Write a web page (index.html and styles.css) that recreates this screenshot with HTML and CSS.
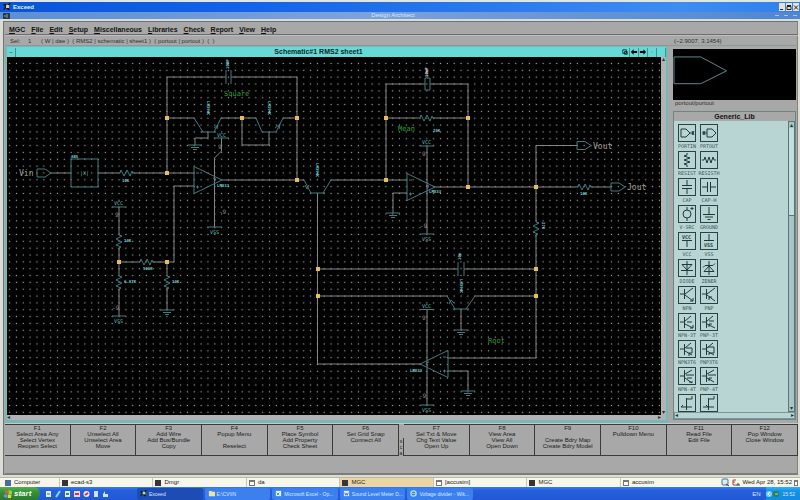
FILE: index.html
```html
<!DOCTYPE html>
<html lang="en">
<head>
<meta charset="utf-8">
<title>Exceed</title>
<link rel="stylesheet" href="styles.css">
</head>
<body>
<svg class="defs" aria-hidden="true">
  <defs>
    <pattern id="grid" x="6.2" y="60.1" width="6.84" height="6.84" patternUnits="userSpaceOnUse"><rect x="2.8" y="2.8" width="1.200" height="1.200" fill="#a6a6a6"/></pattern>
    <path id="res" d="M-8 0h2l1-3 3 6 3-6 3 6 2-5 1 2h2"/>
    <path id="gnd" d="M-7 0H7M-4 2.500H4M-2 4.500H2"/>
    <path id="port" d="M0-4h8l6 4-6 4H0z"/>
    <path id="amp" d="M0-13.500V13.500L28 0zM2-7h3M2 7h3M3.500 5.500v3M19-2l3 1-2 3"/>
    <rect id="node" x="-2" y="-2" width="4" height="4"/>
  </defs>
</svg>

<header class="exceed-bar">
  <svg class="logo" viewBox="0 0 8 8"><path d="M0 1h3l1 2 2-3h2L5 4l2 3H5L3 5 1 7H0l2-3z" fill="#111"/><path d="M3 2h3v3H3z" fill="#d9dc50"/></svg>
  <h1>Exceed</h1>
  <div class="win-buttons">
    <button type="button" aria-label="Minimize"><svg viewBox="0 0 6 7"><path d="M1 5.500h3"/></svg></button>
    <button type="button" aria-label="Restore"><svg viewBox="0 0 6 7"><path d="M1 2.500h4v3H1zM1 1.500h4"/></svg></button>
    <button type="button" aria-label="Close"><svg viewBox="0 0 6 7"><path d="M1 1.500l4 4M5 1.500l-4 4"/></svg></button>
  </div>
</header>
<div class="app-bar">
  <svg class="logo" viewBox="0 0 8 6"><path d="M0 0h7v6H0z" fill="#23384a"/><path d="M1 3h2M4 1v4" stroke="#8fa7b5"/></svg>
  <h2>Design Architect</h2>
  <span class="app-buttons"><i></i><i></i><i></i></span>
</div>

<main class="app">
  <nav class="menu">
    <button type="button"><u>M</u>GC</button><button type="button"><u>F</u>ile</button><button type="button"><u>E</u>dit</button><button type="button"><u>S</u>etup</button><button type="button"><u>M</u>iscellaneous</button><button type="button"><u>L</u>ibraries</button><button type="button"><u>C</u>heck</button><button type="button"><u>R</u>eport</button><button type="button"><u>V</u>iew</button><button type="button"><u>H</u>elp</button>
  </nav>
  <div class="status">
    <span class="sel">Sel:</span><span class="count">1</span><span class="path">( W | dae )&nbsp; ( RMS2 | schematic | sheet1 )&nbsp; ( portout | portout )&nbsp; (&nbsp; )</span>
    <span class="coords">(−2.9007, 3.1454)</span>
  </div>

  <div class="work">
    <section class="sheet">
      <div class="sheet-title">
        <button type="button" aria-label="Window menu">–</button>
        <h3>Schematic#1 RMS2 sheet1</h3>
        <div class="sheet-tools">
          <button type="button" aria-label="Copy view"><svg viewBox="0 0 9 9"><path d="M2 2h4v4H2zM4 4h3v3H4z" fill="none" stroke="#123"/></svg></button>
          <button type="button" aria-label="Back"><svg viewBox="0 0 9 9"><path d="M1 4.500l3-3v2h4v2H4v2z"/></svg></button>
          <button type="button" aria-label="Forward"><svg viewBox="0 0 9 9"><path d="M8 4.500l-3-3v2H1v2h4v2z"/></svg></button>
          <button type="button" aria-label="Iconify"><svg viewBox="0 0 9 9"><path d="M4 4h1v1H4z" fill="#3a9a9a"/></svg></button>
          <button type="button" aria-label="Maximize"></button>
        </div>
      </div>
      <div class="sheet-body">
        <svg class="schematic" role="img" aria-label="RMS detector schematic">
          <g transform="translate(-7 -57)">
            <rect x="7" y="60" width="3000" height="3000" fill="url(#grid)"/>
            <g class="wire">
              <path d="M167 173V77H226M231 77H297V180M167 118H194M221 118H256M283 118H297M208 132V138H195V145M269 132V145H242V118M221.500 138V151L214.500 158V227M167 173H194M194 186H174V262H154M222 180H304M50 173H71M98 173H118M134 173H167M119 207V234M119 248V274M119 289V316M119 262H138M167 262V274M167 288V310M331 180H407M386 180V84H425M430 84H468V187M386 118H418M434 118H468M427 146V234M407 193H393V213M434 187H576M592 187H611M536 187V145.500H577M536 187V221M536 235V358H448M317.500 193V364H420M318 269H458M464 269H536M318 296H447M475 296H536M461 309V330M427 309V405M448 371H468V391"/>
            </g>
            <g class="part">
              <path d="M226 70V84M231 70V84M194 118L203 132M201 132H216M214 132L221 118M214 128l4-3-1 4M256 118L262 132M262 132H277M276 132L283 118M275 128l5-4-1 5M304 180L311 193M310 193H325M323 193L331 180M305 185l2 4 2-4M447 296L455 309M453 309H469M466 309L475 296M449 304l2-4 3 3M458 262V276M464 262V276M425 78h5v12h-5zM71 159H98V187H71z"/>
              <path d="M214 138H229M207 227H222M112 207H126M112 316H126M420 146H434M420 234H434M420 309.500H434M420 405H434"/>
              <use href="#gnd" x="195" y="145"/><use href="#gnd" x="167" y="310"/><use href="#gnd" x="393" y="213"/><use href="#gnd" x="461" y="330"/><use href="#gnd" x="468" y="391"/>
              <use href="#res" x="126" y="173"/><use href="#res" x="146" y="262"/><use href="#res" x="426" y="118"/><use href="#res" x="584" y="187"/>
              <use href="#res" transform="translate(119 241) rotate(90)"/><use href="#res" transform="translate(119 282) rotate(90)"/><use href="#res" transform="translate(167 282) rotate(90)"/><use href="#res" transform="translate(536 228) rotate(90)"/>
              <use href="#amp" x="194" y="180"/><use href="#amp" x="407" y="187"/><use href="#amp" transform="translate(448 364) scale(-1 1)"/>
              <use href="#port" x="37" y="173"/><use href="#port" x="577" y="145.500"/><use href="#port" x="611" y="187"/>
            </g>
            <g class="node">
              <use href="#node" x="167" y="118"/><use href="#node" x="242" y="118"/><use href="#node" x="297" y="118"/><use href="#node" x="297" y="180"/><use href="#node" x="167" y="173"/><use href="#node" x="119" y="262"/><use href="#node" x="167" y="262"/><use href="#node" x="386" y="118"/><use href="#node" x="468" y="118"/><use href="#node" x="386" y="180"/><use href="#node" x="468" y="187"/><use href="#node" x="536" y="187"/><use href="#node" x="318" y="269"/><use href="#node" x="318" y="296"/><use href="#node" x="536" y="269"/><use href="#node" x="536" y="296"/>
            </g>
            <g class="net">
              <text x="19" y="176">Vin</text><text x="593" y="149">Vout</text><text x="627" y="190">Jout</text>
            </g>
            <g class="note">
              <text x="224" y="96">Square</text><text x="398" y="131">Mean</text><text x="488" y="343">Root</text>
            </g>
            <g class="pin">
              <text x="219" y="214">-9</text><text x="218" y="149">9</text><text x="115" y="217">9</text><text x="112" y="310">-9</text><text x="422" y="156">9</text><text x="420" y="228">-9</text><text x="422" y="320">9</text><text x="419" y="398">-9</text>
            </g>
            <g class="label">
              <text x="71" y="158">ABS</text><text x="122" y="182">10K</text><text x="124" y="242">10K</text><text x="124" y="283">6.87K</text><text x="172" y="283">10K</text><text x="143" y="270">500K</text><text x="433" y="132">20K</text><text x="580" y="195">10K</text>
              <text x="217" y="187">LM833</text><text x="429" y="193">LM833</text><text x="410" y="372">LM833</text>
              <text transform="translate(207 101) rotate(90)">LM394C</text><text transform="translate(268 101) rotate(90)">LM394C</text><text transform="translate(316 163) rotate(90)">LM394C</text><text transform="translate(460 279) rotate(90)">LM394C</text><text transform="translate(542 222) rotate(90)">27K</text><text transform="translate(229 69) rotate(-90)">100P</text><text transform="translate(461 260) rotate(-90)">10n</text><text class="picked" transform="translate(428 77) rotate(-90)">10uF</text>
            </g>
            <g class="rail">
              <text x="217" y="137">VCC</text><text x="210" y="234">VSS</text><text x="114" y="205">VCC</text><text x="114" y="323">VSS</text><text x="422" y="144">VCC</text><text x="422" y="241">VSS</text><text x="422" y="308">VCC</text><text x="422" y="412">VSS</text><text x="80" y="175">|X|</text>
            </g>
          </g>
        </svg>
        <div class="vscroll"><span>▴</span><span>▾</span></div>
        <div class="hscroll"><span>◂</span><span>▸</span></div>
      </div>
    </section>

    <aside class="side">
      <div class="preview"><svg viewBox="0 0 124 51" preserveAspectRatio="xMinYMin meet"><path d="M1 8H28L54 22L28 35H1z" fill="none" stroke="#5b8b8b"/></svg></div>
      <p class="preview-name">portout/portout</p>
      <section class="library">
        <h3>Generic_Lib</h3>
        <div class="library-body">
          <div class="parts">
            <button type="button"><svg viewBox="0 0 18 18"><path d="M3 5h5l4 4-4 4H3zM12 9h4M14 7l2 4M14 11l2-4"/></svg>PORTIN</button>
            <button type="button"><svg viewBox="0 0 18 18"><path d="M7 5h5l4 4-4 4H7zM2 9h5M3 7l2 4M3 11l2-4"/></svg>PRTOUT</button>
            <button type="button"><svg viewBox="0 0 18 18"><path d="M9 2v2l-3 1 6 2-6 2 6 2-6 2 3 1v2"/></svg>RESIST</button>
            <button type="button"><svg viewBox="0 0 18 18"><path d="M2 9h2l1-3 2 6 2-6 2 6 2-6 1 3h2"/></svg>RESISTH</button>
            <button type="button"><svg viewBox="0 0 18 18"><path d="M9 2v5M4 7.500h10M4 10.500h10M9 11v5"/></svg>CAP</button>
            <button type="button"><svg viewBox="0 0 18 18"><path d="M2 9h5M7.500 4v10M10.500 4v10M11 9h5"/></svg>CAP-H</button>
            <button type="button"><svg viewBox="0 0 18 18"><path d="M9 2v3M9 13v3M14 2v3M12.500 3.500h3"/><circle cx="9" cy="9" r="4"/></svg>V-SRC</button>
            <button type="button"><svg viewBox="0 0 18 18"><path d="M9 2v7M3 9.500h12M5 12h8M7.500 14.500h3"/></svg>GROUND</button>
            <button type="button"><svg viewBox="0 0 18 18"><path d="M4 8.500h10M9 9v6"/><text x="4" y="7">VCC</text></svg>VCC</button>
            <button type="button"><svg viewBox="0 0 18 18"><path d="M9 2v6M4 8.500h10"/><text x="4" y="15">VSS</text></svg>VSS</button>
            <button type="button"><svg viewBox="0 0 18 18"><path d="M9 2v14M4 5.500h10L9 11zM3 11.500h12"/></svg>DIODE</button>
            <button type="button"><svg viewBox="0 0 18 18"><path d="M9 2v14M4 12.500h10L9 7zM3 8.500l2-2h8l2-2"/></svg>ZENER</button>
            <button type="button"><svg viewBox="0 0 18 18"><path d="M2 8h4M6.500 3v10M7 8l8-6M7 9l8 6M12 15h3v-3"/></svg>NPN</button>
            <button type="button"><svg viewBox="0 0 18 18"><path d="M2 8h4M6.500 3v10M7 8l8-6M7 9l8 6M12 11h-3v3"/></svg>PNP</button>
            <button type="button"><svg viewBox="0 0 18 18"><path d="M2 9h4M6.500 4v11M7 8l6-5M7 11l8 4M12 15h3v-3M9 9h5"/></svg>NPN-3T</button>
            <button type="button"><svg viewBox="0 0 18 18"><path d="M2 9h4M6.500 4v11M7 8l6-5M7 11l8 4M12 11h-3v3M9 8h5"/></svg>PNP-3T</button>
            <button type="button"><svg viewBox="0 0 18 18"><path d="M2 9h4M6.500 4v11M7 8l6-5M7 11l7 4M8 8h6v5h-3v3"/></svg>NPN3T6</button>
            <button type="button"><svg viewBox="0 0 18 18"><path d="M2 9h4M6.500 4v11M7 8l6-5M7 11l7 4M8 7h6v6h-5v2"/></svg>PNP3T6</button>
            <button type="button"><svg viewBox="0 0 18 18"><path d="M2 9h4M6.500 3v12M7 7l7-4M7 11l7 5M11 15h4M8 8h8M9 11h5"/></svg>NPN-4T</button>
            <button type="button"><svg viewBox="0 0 18 18"><path d="M2 9h4M6.500 3v12M7 7l7-4M7 11l7 4M12 11h-3v3M8 8h8"/></svg>PNP-4T</button>
            <button type="button" aria-label="N-channel JFET"><svg viewBox="0 0 18 18"><path d="M8.500 4v12M9 5h5M14 2v3M9 13h5M3 13h5M5 11l-2 2"/></svg></button>
            <button type="button" aria-label="P-channel JFET"><svg viewBox="0 0 18 18"><path d="M8.500 4v12M9 5h5M14 2v3M9 13h5M3 13h5M6 11l2 2"/></svg></button>
          </div>
          <div class="vscroll"><span>▴</span><i></i><span>▾</span></div>
          <div class="hscroll"><span>◂</span><span>▸</span></div>
        </div>
      </section>
    </aside>
  </div>

  <div class="keys">
    <button type="button">F1<br>Select Area Any<br>Select Vertex<br>Reopen Select</button>
    <button type="button">F2<br>Unselect All<br>Unselect Area<br>Move</button>
    <button type="button">F3<br>Add Wire<br>Add Bus/Bundle<br>Copy</button>
    <button type="button">F4<br>Popup Menu<br><br>Reselect</button>
    <button type="button">F5<br>Place Symbol<br>Add Property<br>Check Sheet</button>
    <button type="button">F6<br>Set Grid Snap<br>Connect All</button>
    <span class="mods">s<br>c<br>a</span>
    <button type="button">F7<br>Sel Txt &amp; Move<br>Chg Text Value<br>Open Up</button>
    <button type="button">F8<br>View Area<br>View All<br>Open Down</button>
    <button type="button">F9<br><br>Create Bdry Map<br>Create Bdry Model</button>
    <button type="button">F10<br>Pulldown Menu</button>
    <button type="button">F11<br>Read File<br>Edit File</button>
    <button type="button">F12<br>Pop Window<br>Close Window</button>
  </div>
  <div class="message"></div>
</main>

<nav class="panel">
  <button type="button" class="computer"><i class="ico blue"></i>Computer</button>
  <div class="panel-tasks">
    <button type="button"><i class="ico"></i>ecad-s3</button>
    <button type="button"><i class="ico"></i>Dmgr</button>
    <button type="button"><i class="ico frame"></i>da</button>
    <button type="button" class="active"><i class="ico"></i>MGC</button>
    <button type="button"><i class="ico frame"></i>[accusim]</button>
    <button type="button"><i class="ico"></i>MGC</button>
    <button type="button"><i class="ico frame"></i>accusim</button>
  </div>
  <svg class="panel-tray" viewBox="0 0 20 9"><rect x="1" y="1" width="6" height="6" rx="1" fill="#dceaf5" stroke="#457096"/><path d="M5 6l3 2" stroke="#333"/><path d="M12 2h3M12 2v5h3M12 4h2" stroke="#b04040" fill="none"/><path d="M15 7h4M17 5v2" stroke="#333"/></svg>
  <time>Wed Apr 28, 15:52</time>
  <i class="ico frame end"></i>
</nav>

<footer class="taskbar">
  <button type="button" class="start"><svg viewBox="0 0 8 8"><path d="M1 1l3-1v3.500H1z" fill="#ef5b2b"/><path d="M4.500 0L8 1v3H4.500z" fill="#8cd24a"/><path d="M0 4.500h3.500V8L0 7z" fill="#5b9bf5"/><path d="M4 4.500h3.500L7 8H4z" fill="#f8cf3a"/></svg>start</button>
  <div class="quick">
    <svg viewBox="0 0 66 8"><rect x="1" y="1" width="5" height="6" fill="#e8f0ff"/><path d="M2 4h3" stroke="#2a62c8"/><path d="M11 7l4-6" stroke="#7fe0e8" stroke-width="2"/><rect x="20" y="1" width="5" height="6" fill="#dff2e0"/><path d="M21 4h3" stroke="#2c9b46" stroke-width="2"/><rect x="29" y="1" width="6" height="6" fill="#f2d0d4"/><path d="M30 4h4" stroke="#d8324a" stroke-width="2"/><circle cx="41.500" cy="4" r="3" fill="#f4e3ea"/><path d="M40 5l3-2" stroke="#d22b4a" stroke-width="2"/><rect x="49" y="1" width="4" height="6" fill="#cfe3fa"/><path d="M58 7V4l2-3v3h3v3z" fill="#cfe3fa"/></svg>
  </div>
  <div class="win-tasks">
    <button type="button" class="active"><svg viewBox="0 0 8 8"><path d="M0 1h3l1 2 2-3h2L5 4l2 3H5L3 5 1 7H0l2-3z" fill="#0b1a30"/><path d="M3 2h3v3H3z" fill="#d9dc50"/></svg><b>Exceed</b></button>
    <button type="button"><svg viewBox="0 0 8 8"><path d="M1 1h3l1 1h3v5H1z" fill="#f1e39a"/></svg><b>E:\CV\IN</b></button>
    <button type="button"><svg viewBox="0 0 8 8"><rect x="1" y="1" width="6" height="6" fill="#e8f6e6"/><path d="M2 3l3 3M5 3L2 6" stroke="#2c9b46"/></svg><b>Microsoft Excel - Op...</b></button>
    <button type="button"><svg viewBox="0 0 8 8"><rect x="1" y="1" width="6" height="6" fill="#e8f0ff"/><path d="M2 3l1 3 1-2 1 2 1-3" stroke="#2a62c8" fill="none"/></svg><b>Sound Level Meter D...</b></button>
    <button type="button"><svg viewBox="0 0 8 8"><circle cx="4" cy="4" r="3" fill="none" stroke="#9fe7ee" stroke-width="1.500"/><path d="M2 4h5" stroke="#e0d060"/></svg><b>Voltage divider - Wik...</b></button>
  </div>
  <span class="lang">EN</span>
  <div class="tray"><svg viewBox="0 0 14 8"><circle cx="3" cy="4" r="3" fill="#7fd0fa"/><path d="M4 2L2 4l2 2" stroke="#fff" fill="none"/><circle cx="10" cy="4" r="3" fill="#2d7d4a"/><path d="M9 4h3" stroke="#d8e060"/></svg><time>15:52</time></div>
</footer>
</body>
</html>
```

FILE: styles.css
```css
* { box-sizing: border-box; }

body {
  margin: 0;
  height: 100vh;
  display: flex;
  flex-direction: column;
  background: #a8a8a8;
  color: #1c1c1c;
  font: 6px/8px "Liberation Sans", Arial, sans-serif;
  overflow: hidden;
}

h1, h2, h3, p { margin: 0; font-size: 7px; line-height: 8px; }

button {
  margin: 0;
  padding: 0;
  border: 0;
  background: none;
  color: inherit;
  font: inherit;
}

svg { display: block; }
i { display: block; }

.defs { position: absolute; width: 0; height: 0; }

/* Window title bars */
.exceed-bar {
  flex: none;
  display: flex;
  align-items: center;
  gap: 2px;
  height: 12px;
  padding: 0 1px 0 3px;
  border-top: 2px solid #dfe6e6;
  background: linear-gradient(90deg, #0a55d8, #1263e8 30%, #3e8cf2 85%, #2f80ee);
  color: #e4efff;
}
.exceed-bar .logo { width: 8px; height: 8px; }
.exceed-bar h1 { font-size: 6px; }
.win-buttons { display: flex; gap: 1px; margin-left: auto; }
.win-buttons button { width: 6px; height: 8px; background: #e3e3dc; }
.win-buttons svg { width: 6px; height: 7px; fill: none; stroke: #222; }

.app-bar {
  flex: none;
  display: flex;
  align-items: center;
  height: 7px;
  padding: 0 3px;
  background: linear-gradient(90deg, #5c8fd4, #7ba2dc 45%, #5087d2);
  color: #dce8fa;
}
.app-bar .logo { width: 8px; height: 6px; }
.app-bar h2 { flex: 1; text-align: center; font-size: 6px; font-weight: 400; line-height: 7px; }
.app-buttons { display: flex; gap: 5px; }
.app-buttons i { width: 4px; height: 1px; background: #a9c6ee; }

/* Application frame */
.app {
  flex: 1;
  display: flex;
  flex-direction: column;
  min-height: 0;
  border: solid #dcdcd6;
  border-width: 2px 2px 2px 3px;
  padding: 0 0 0 2px;
  background: #a8a8a8;
  box-shadow: inset 1px 1px #6c7474, inset -1px -1px #8a8278;
}

.menu {
  flex: none;
  display: flex;
  align-items: center;
  gap: 6px;
  height: 14px;
  padding: 4px 4px 0;
  border-bottom: 1px solid #6d6d6d;
  color: #111;
  font-size: 7px;
  font-weight: 700;
}

.status {
  flex: none;
  display: flex;
  align-items: center;
  height: 11px;
  padding: 0 5px;
  border-top: 1px solid #bdbdbd;
  border-bottom: 1px solid #8a9a9a;
  color: #303030;
}
.sel { width: 18px; }
.count { width: 13px; }
.coords { margin-left: auto; width: 119px; }

.work { flex: 1; display: flex; gap: 4px; min-height: 0; }

/* Schematic window */
.sheet {
  flex: 1;
  display: flex;
  flex-direction: column;
  min-width: 0;
  border: solid #78b8b4;
  border-width: 1px 2px 3px;
}
.sheet-title {
  flex: none;
  display: flex;
  align-items: center;
  height: 10px;
  background: #67d9d6;
  color: #102828;
}
.sheet-title button { width: 9px; height: 9px; border-right: 1px solid #3d9693; line-height: 8px; }
.sheet-title h3 { flex: 1; text-align: center; }
.sheet-tools { display: flex; }
.sheet-tools svg { width: 8px; height: 8px; }
.sheet-body {
  flex: 1;
  display: grid;
  grid-template: minmax(0, 1fr) 5px / minmax(0, 1fr) 5px;
  min-height: 0;
  background: #b4aeb6;
}
.schematic { width: 100%; height: 100%; background: #000; }

.vscroll, .hscroll {
  display: flex;
  justify-content: space-between;
  overflow: hidden;
  background: #b0b4b4;
  color: #173838;
  font-size: 6px;
  line-height: 5px;
  text-align: center;
}
.vscroll { flex-direction: column; }

.wire { fill: none; stroke: #858585; }
.part { fill: none; stroke: #427c7e; }
.node { fill: #e8bd5c; }
.schematic text { font-family: "DejaVu Sans Mono", monospace; }
.net { fill: #aaa194; font-size: 8px; }
.note { fill: #35a035; font-size: 7px; }
.pin { fill: #9a8c88; font-size: 6px; }
.label { fill: #6fd0d4; font-size: 4px; font-weight: 700; }
.rail { fill: #62c0bc; font-size: 5px; }
.picked { fill: #e8e8e8; }

/* Preview and parts library */
.side { flex: 0 0 126px; display: flex; flex-direction: column; min-height: 0; padding: 3px 2px 3px 1px; }
.preview { flex: none; height: 51px; background: #000; }
.preview svg { width: 100%; height: 51px; }
.preview-name { padding-left: 2px; color: #303030; font-size: 6px; line-height: 7px; font-weight: 400; }
.library {
  flex: 1;
  display: flex;
  flex-direction: column;
  min-height: 0;
  margin-top: 4px;
  border: 1px solid #6f8585;
}
.library h3 { flex: none; height: 9px; text-align: center; line-height: 9px; color: #111; }
.library-body {
  flex: 1;
  display: grid;
  grid-template: minmax(0, 1fr) 7px / minmax(0, 1fr) 7px;
  min-height: 0;
  background: #b8d5d4;
}
.parts {
  display: grid;
  grid-template-columns: 18px 18px;
  grid-auto-rows: 27px;
  align-content: start;
  gap: 0 4px;
  padding: 3px 4px 0;
  overflow: hidden;
}
.parts button {
  display: flex;
  flex-direction: column;
  align-items: center;
  color: #3c5656;
  font: 5px/8px "DejaVu Sans Mono", monospace;
  white-space: nowrap;
}
.parts svg {
  flex: none;
  width: 18px;
  height: 18px;
  outline: 1px solid #264444;
  outline-offset: -1px;
  fill: none;
  stroke: #1e3939;
}
.parts text { fill: #1e3939; stroke: none; font: 700 5px "DejaVu Sans Mono", monospace; }
.library .vscroll { background: #a9c4c4; border: 1px solid #5a7676; line-height: 6px; }
.library .vscroll i { flex: 0 0 88px; margin-bottom: auto; background: #c4dedd; border-bottom: 1px solid #5a7676; }
.library .hscroll { grid-column: 1 / -1; background: #b8d5d4; border: 1px solid #7b9696; }

/* Function keys */
.keys {
  flex: none;
  display: grid;
  grid-template-columns: repeat(6, 1fr) 5px repeat(6, 1fr);
  height: 33px;
  border-top: 1px solid #c0cccc;
}
.keys button {
  display: flex;
  flex-direction: column;
  border: solid #3b3b3b;
  border-width: 1px 1px 1px 0;
  color: #202020;
  line-height: 6px;
  white-space: nowrap;
}
.mods { align-self: end; border-right: 1px solid #3b3b3b; font-size: 5px; line-height: 6px; text-align: center; }
.message { flex: none; height: 19px; border-bottom: 2px solid #7d7d78; }

/* Desktop panel */
.panel {
  flex: none;
  display: flex;
  align-items: center;
  height: 10px;
  padding: 0 2px 0 5px;
  border-top: 1px solid #b8b8a8;
  background: #f7f6ea;
  color: #222;
  line-height: 9px;
}
.panel button { display: flex; align-items: center; gap: 3px; }
.computer { width: 54px; }
.panel-tasks { flex: 1; display: grid; grid-template-columns: repeat(7, 1fr); }
.panel-tasks button { height: 9px; padding-left: 2px; border-left: 1px solid #c9c5ac; }
.panel-tasks .active { background: #ecd4a4; }
.ico { width: 6px; height: 6px; background: #3a3434; }
.ico.blue { background: #4a6aa0; }
.ico.frame { background: #fff; border: 1px solid #777; border-top-width: 2px; }
.ico.end { width: 4px; margin-left: 2px; }
.panel-tray { width: 20px; height: 9px; margin: 0 1px 0 8px; }
.panel time { white-space: nowrap; }

/* Windows taskbar */
.taskbar {
  flex: none;
  display: flex;
  align-items: center;
  height: 13px;
  background: linear-gradient(#3a7bea, #2460dc 25%, #2258d6);
  color: #dce9ff;
}
.start {
  display: flex;
  align-items: center;
  gap: 2px;
  width: 40px;
  height: 13px;
  padding-left: 4px;
  border-radius: 0 6px 6px 0;
  background: linear-gradient(#58ad55, #369038 40%, #2c7c2e);
  color: #f0fff0;
}
.taskbar .start { font: italic 700 8px/12px "Liberation Sans", Arial, sans-serif; }
.start svg { width: 8px; height: 8px; }
.quick { width: 97px; padding-left: 5px; }
.quick svg { width: 66px; height: 8px; }
.win-tasks { flex: 0 1 336px; display: grid; grid-template-columns: repeat(5, 1fr); gap: 2px; }
.win-tasks button {
  display: flex;
  align-items: center;
  gap: 2px;
  height: 12px;
  padding-left: 3px;
  border-radius: 2px;
  background: #3c80f0;
  font-size: 5px;
  white-space: nowrap;
}
.win-tasks svg { flex: none; width: 7px; height: 7px; }
.win-tasks b { font-weight: 400; }
.win-tasks .active { background: #1c4cb4; }
.lang { margin: 0 6px 0 auto; }
.tray {
  display: flex;
  align-items: center;
  gap: 2px;
  height: 13px;
  padding: 0 5px 0 0;
  background: linear-gradient(#38b0f4, #1592e8 30%, #128be0);
  font-size: 5px;
}
.tray svg { width: 14px; height: 8px; }
```
